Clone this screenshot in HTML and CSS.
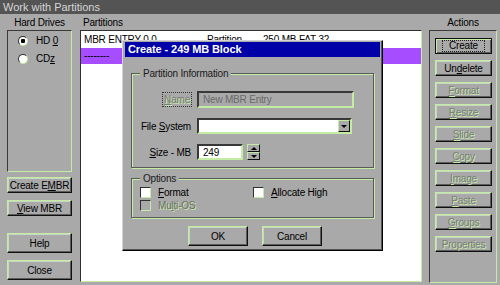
FILE: index.html
```html
<!DOCTYPE html>
<html lang="en">

<head>
  <meta charset="UTF-8">
  <title>Work with Partitions</title>
  <link rel="stylesheet" href="styles.css">
</head>

<body>
  <div class="window">
    <div class="titlebar">Work with Partitions</div>

    <div class="main">
      <!-- left column: drives -->
      <div class="col col--drives">
        <div class="col__label">Hard Drives</div>
        <div class="panel panel--drives">
          <div class="radio"><span class="radio__dot radio__dot--on"></span><span>HD <u>0</u></span></div>
          <div class="radio"><span class="radio__dot"></span><span>CD<u>z</u></span></div>
        </div>
        <button type="button" class="btn btn--side btn--embr"><span>Create E<u>M</u>BR</span></button>
        <button type="button" class="btn btn--side btn--mbr"><span><u>V</u>iew MBR</span></button>
        <button type="button" class="btn btn--side btn--tall btn--help"><span>Help</span></button>
        <button type="button" class="btn btn--side btn--tall btn--close"><span>Close</span></button>
      </div>

      <!-- middle column: partition list -->
      <div class="col col--parts">
        <div class="col__label col__label--left">Partitions</div>
        <div class="list">
          <div class="list__row">
            <span>MBR ENTRY 0 0</span>
            <span>Partition</span>
            <span>250 MB</span>
            <span>FAT 32</span>
          </div>
          <div class="list__row list__row--selected">
            <span>--------</span>
          </div>
        </div>
      </div>

      <!-- right column: actions -->
      <div class="col col--actions">
        <div class="col__label">Actions</div>
        <div class="panel panel--actions">
          <button type="button" class="btn btn--action btn--default"><span class="btn__focus">Create</span></button>
          <button type="button" class="btn btn--action"><span>Un<u>d</u>elete</span></button>
          <button type="button" class="btn btn--action btn--disabled"><span><u>F</u>ormat</span></button>
          <button type="button" class="btn btn--action btn--disabled"><span><u>R</u>esize</span></button>
          <button type="button" class="btn btn--action btn--disabled"><span><u>S</u>lide</span></button>
          <button type="button" class="btn btn--action btn--disabled"><span><u>C</u>opy</span></button>
          <button type="button" class="btn btn--action btn--disabled"><span><u>I</u>mage</span></button>
          <button type="button" class="btn btn--action btn--disabled"><span><u>P</u>aste</span></button>
          <button type="button" class="btn btn--action btn--disabled"><span><u>G</u>roups</span></button>
          <button type="button" class="btn btn--action btn--disabled"><span>Properties</span></button>
        </div>
      </div>
    </div>

    <!-- modal dialog -->
    <div class="dialog">
      <div class="dialog__title">Create - 249 MB Block</div>

      <div class="group group--info">
        <span class="group__legend">Partition Information</span>
        <div class="field">
          <span class="field__label"><span class="field__label--disabled"><u>N</u>ame</span></span>
          <div class="input input--disabled">New MBR Entry</div>
        </div>
        <div class="field field--select">
          <span class="field__label">File <u>S</u>ystem</span>
          <div class="input input--select">
            <span class="input__arrow"><span class="tri tri--down"></span></span>
          </div>
        </div>
        <div class="field field--size">
          <span class="field__label"><u>S</u>ize - MB</span>
          <div class="size">
            <div class="input input--size">249</div>
            <div class="spin">
              <span class="spin__btn"><span class="tri tri--up"></span></span>
              <span class="spin__btn"><span class="tri tri--down"></span></span>
            </div>
          </div>
        </div>
      </div>

      <div class="group group--options">
        <span class="group__legend">Options</span>
        <div class="options">
          <div class="check"><span class="check__box"></span><span><u>F</u>ormat</span></div>
          <div class="check"><span class="check__box"></span><span><u>A</u>llocate High</span></div>
          <div class="check check--disabled"><span class="check__box"></span><span>Mu<u>l</u>ti-OS</span></div>
        </div>
      </div>

      <div class="dialog__buttons">
        <button type="button" class="btn btn--dialog"><span>OK</span></button>
        <button type="button" class="btn btn--dialog"><span>Cancel</span></button>
      </div>
    </div>
  </div>
</body>

</html>
```

FILE: styles.css
```css
* {
  box-sizing: border-box;
  padding: 0;
  margin: 0;
}

body {
  width: 500px;
  height: 285px;
  overflow: hidden;
  background-color: #a9a9a9;
  font-family: "Liberation Sans", Arial, sans-serif;
  font-size: 10px;
  letter-spacing: -0.2px;
  color: #000;
}

u {
  text-underline-offset: 1px;
}

.window {
  position: relative;
  height: 285px;
}

/* title bar */
.titlebar {
  height: 14px;
  padding-left: 3px;
  background-color: #545454;
  color: #d6d6d6;
  font-size: 11px;
  letter-spacing: 0;
  line-height: 14px;
}

/* three columns */
.main {
  display: flex;
  padding-left: 7px;
}

.col {
  display: flex;
  flex-direction: column;
}

.col--drives {
  width: 65px;
}

.col--parts {
  width: 342px;
  margin-left: 8px;
}

.col--actions {
  width: 68px;
  margin-left: 7px;
}

.col__label {
  height: 16px;
  line-height: 17px;
  text-align: center;
}

.col__label--left {
  text-align: left;
  padding-left: 3px;
}

/* sunken panels */
.panel {
  border: 1px solid;
  border-color: #3a3a3a #c4eca4 #c4eca4 #3a3a3a;
}

.panel--drives {
  height: 142px;
  padding: 4px 0 0 10px;
  display: flex;
  flex-direction: column;
  gap: 7px;
}

.panel--actions {
  height: 253px;
  padding: 7px 0 0 5px;
  display: flex;
  flex-direction: column;
  gap: 6px;
}

/* radio buttons */
.radio {
  display: flex;
  align-items: center;
  gap: 8px;
  height: 11px;
}

.radio__dot {
  width: 10px;
  height: 10px;
  border-radius: 50%;
  background-color: #fff;
  border: 1px solid;
  border-color: #303030 #c4eca4 #c4eca4 #303030;
}

.radio__dot--on {
  background: radial-gradient(circle, #000 0 2px, #fff 2.5px);
}

/* buttons */
.btn {
  display: flex;
  align-items: center;
  justify-content: center;
  background-color: #a9a9a9;
  border: 1px solid;
  border-color: #c4eca4 #101010 #101010 #c4eca4;
  box-shadow: inset -1px -1px 0 #5c5c5c, inset 1px 1px 0 #c8d8c0;
  font: inherit;
  letter-spacing: inherit;
  color: #000;
  white-space: nowrap;
}

.btn--side {
  width: 65px;
  height: 16px;
}

.btn--embr {
  margin-top: 5px;
}

.btn--mbr {
  margin-top: 7px;
}

.btn--tall {
  height: 20px;
}

.btn--help {
  margin-top: 17px;
}

.btn--close {
  margin-top: 7px;
}

.btn--action {
  width: 57px;
  height: 16px;
}

.btn--default {
  border-color: #101010;
  box-shadow: inset 1px 1px 0 #c4eca4, inset -1px -1px 0 #5c5c5c;
}

.btn__focus {
  padding: 0 6px;
  outline: 1px dotted #202020;
  line-height: 10px;
}

.btn--disabled {
  color: #7c7c7c;
  text-shadow: 1px 1px 0 #c4eca4;
}

.btn--dialog {
  width: 60px;
  height: 20px;
}

/* partition list */
.list {
  height: 252px;
  padding-top: 1px;
  background-color: #fff;
  border: 1px solid;
  border-color: #303030 #c4eca4 #c4eca4 #303030;
}

.list__row {
  display: grid;
  grid-template-columns: 123px 56px 36px auto;
  height: 16px;
  padding-left: 3px;
  line-height: 16px;
}

.list__row--selected {
  background-color: #a64dff;
}

/* dialog */
.dialog {
  position: absolute;
  left: 122px;
  top: 40px;
  width: 261px;
  height: 211px;
  padding: 1px 2px;
  background-color: #a9a9a9;
  border: 1px solid;
  border-color: #d4d4d4 #000 #000 #d4d4d4;
  box-shadow: inset -1px -1px 0 #555;
}

.dialog__title {
  height: 15px;
  padding-left: 3px;
  background-color: #0000a8;
  color: #fff;
  font-weight: bold;
  font-size: 11px;
  letter-spacing: -0.1px;
  line-height: 15px;
}

/* etched group boxes */
.group {
  position: relative;
  margin: 0 6px;
  border: 1px solid #5a5a5a;
  box-shadow: inset 1px 1px 0 #c4eca4, 1px 1px 0 #c4eca4;
}

.group__legend {
  position: absolute;
  top: -7px;
  left: 8px;
  padding: 0 3px;
  line-height: 13px;
  background-color: #a9a9a9;
  color: #1a1a1a;
}

.group--info {
  margin-top: 16px;
  padding: 17px 0 7px;
  display: flex;
  flex-direction: column;
  gap: 10px;
}

.group--options {
  margin-top: 10px;
  padding: 8px 0 6px 8px;
}

/* form rows */
.field {
  display: grid;
  grid-template-columns: 59px 157px;
  column-gap: 6px;
  align-items: center;
  height: 17px;
}

.field--select,
.field--size {
  height: 16px;
}

.field__label {
  text-align: right;
  white-space: nowrap;
}

.field__label--disabled {
  padding: 1px 1px;
  outline: 1px dotted #303030;
  color: #7a7a7a;
  text-shadow: 1px 1px 0 #c4eca4;
}

.input {
  height: 100%;
  padding-left: 4px;
  line-height: 13px;
  background-color: #fff;
  border: 2px solid;
  border-color: #383838 #c4eca4 #c4eca4 #383838;
}

.input--disabled {
  background-color: #a9a9a9;
  color: #6a6a6a;
}

.input--select {
  display: flex;
  justify-content: flex-end;
  width: 155px;
  padding: 0;
}

.input__arrow {
  display: flex;
  align-items: center;
  justify-content: center;
  width: 12px;
  height: 12px;
  background-color: #a9a9a9;
  border: 1px solid;
  border-color: #c4eca4 #101010 #101010 #c4eca4;
}

.size {
  display: flex;
  align-items: center;
  gap: 4px;
  height: 16px;
}

.input--size {
  width: 46px;
}

.spin {
  display: flex;
  flex-direction: column;
  width: 13px;
  height: 16px;
}

.spin__btn {
  display: flex;
  align-items: center;
  justify-content: center;
  height: 8px;
  background-color: #a9a9a9;
  border: 1px solid;
  border-color: #c4eca4 #101010 #101010 #c4eca4;
}

.tri {
  width: 0;
  height: 0;
  border-left: 3px solid transparent;
  border-right: 3px solid transparent;
}

.tri--down {
  border-top: 3px solid #000;
}

.tri--up {
  border-bottom: 3px solid #000;
}

/* checkboxes */
.options {
  display: grid;
  grid-template-columns: 113px auto;
  row-gap: 2px;
}

.check {
  display: flex;
  align-items: center;
  gap: 7px;
  height: 11px;
}

.check__box {
  width: 11px;
  height: 11px;
  background-color: #fff;
  border: 1px solid;
  border-color: #303030 #c4eca4 #c4eca4 #303030;
}

.check--disabled {
  color: #6e6e6e;
  text-shadow: 1px 1px 0 #c4eca4;
}

.check--disabled .check__box {
  background-color: #a9a9a9;
}

.dialog__buttons {
  display: flex;
  justify-content: center;
  gap: 14px;
  margin-top: 8px;
  padding-left: 5px;
}
```
